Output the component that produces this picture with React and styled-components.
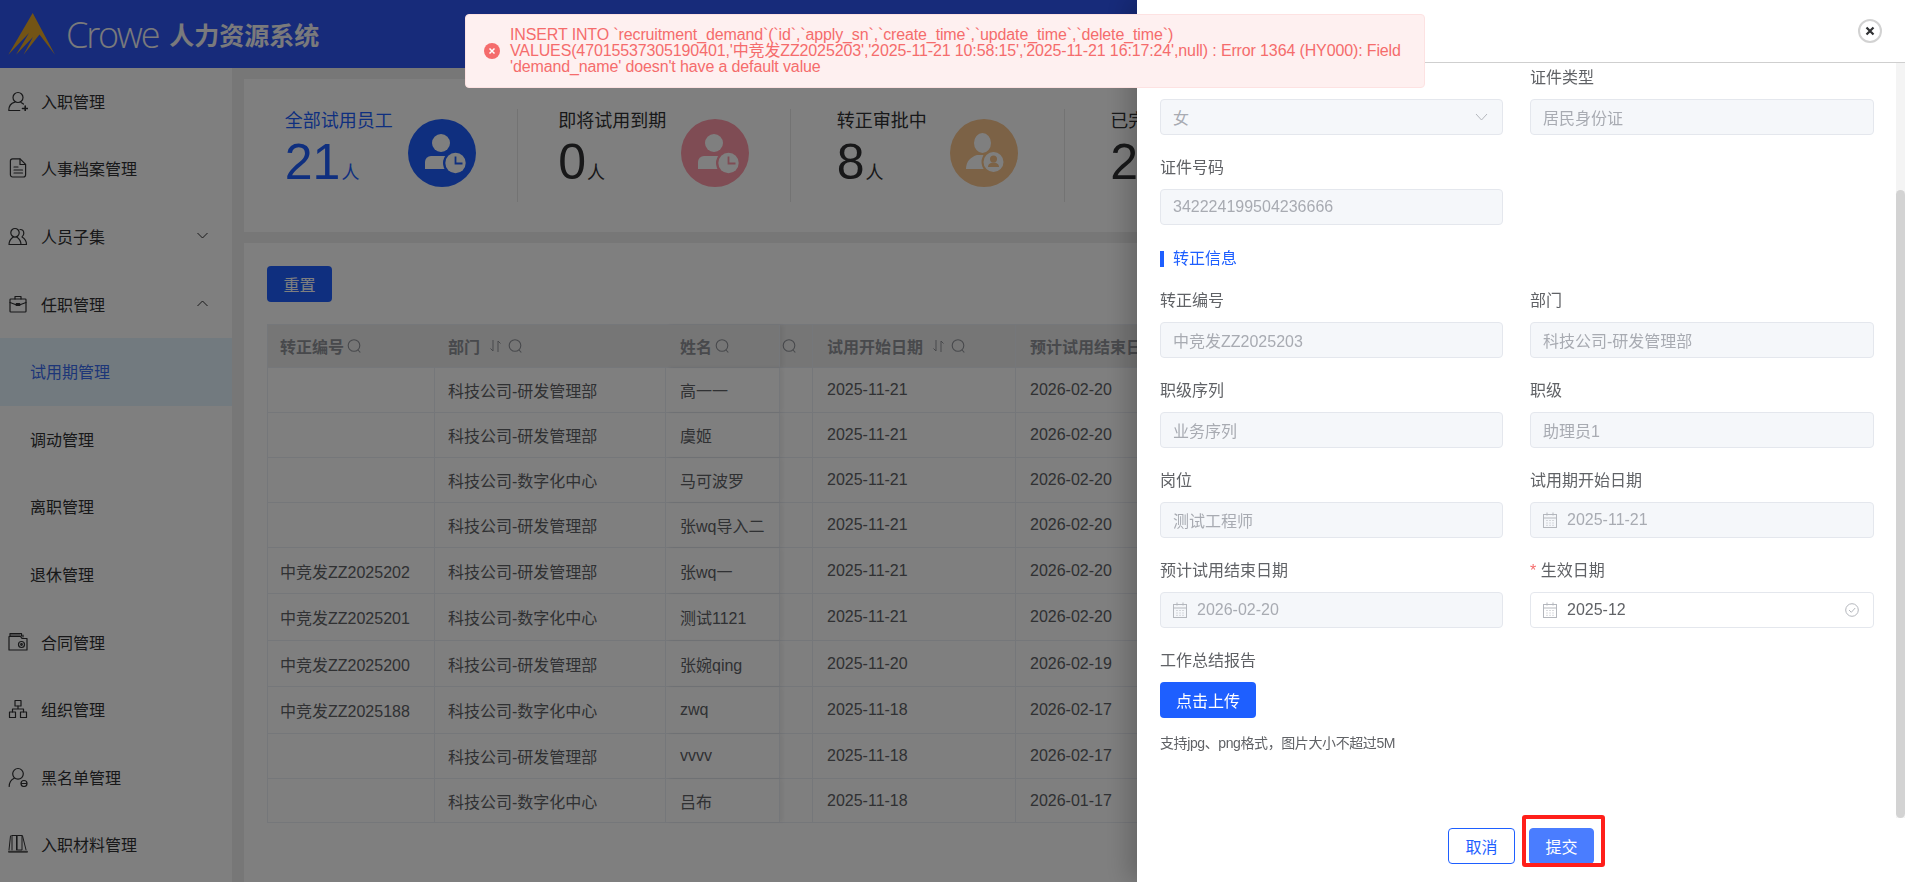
import React from "react";
import styled, { createGlobalStyle } from "styled-components";

const GlobalStyle = createGlobalStyle`
  html, body {
    margin: 0;
    padding: 0;
    height: 100%;
    overflow: hidden;
    font-family: "Liberation Sans", "Noto Sans CJK SC", sans-serif;
    color: #303133;
  }
`;

const Page = styled.div`
  display: flex;
  flex-direction: column;
  height: 100vh;
  overflow: hidden;
`;

const TopBar = styled.header`
  flex: 0 0 68px;
  display: flex;
  align-items: center;
  padding-left: 8px;
  background: #2e56f4;
  color: #fff;
`;

const LogoWord = styled.span`
  margin-left: 10px;
  font-family: "Open Sans", sans-serif;
  font-weight: 300;
  font-size: 36px;
  letter-spacing: -2.2px;
  color: #f4f4f8;
`;

const SystemName = styled.span`
  margin-left: 11px;
  font-size: 25px;
  font-weight: 700;
  color: #f4f4f8;
`;

const Content = styled.div`
  flex: 1;
  display: flex;
  min-height: 0;
`;

const Sidebar = styled.nav`
  flex: 0 0 232px;
  background: #fff;
`;

const MenuItem = styled.div`
  display: flex;
  align-items: center;
  box-sizing: border-box;
  height: 67.6px;
  padding-left: ${(p) => (p.$sub ? "30px" : "8px")};
  padding-bottom: 2px;
  font-size: 16px;
  color: ${(p) => (p.$active ? "#3a6cf0" : "#303133")};
  background: ${(p) => (p.$active ? "#e4f4fe" : "transparent")};
  svg.menu-icon {
    flex: 0 0 20px;
    margin-right: 13px;
  }
`;

const Chevron = styled.svg`
  margin-left: auto;
  margin-right: 24px;
`;

const Main = styled.main`
  flex: 1;
  min-width: 0;
  background: #eeeeee;
  padding: 11px 12px 0 12px;
  overflow: hidden;
`;

const StatCard = styled.section`
  display: grid;
  grid-template-columns: repeat(6, 273.5px);
  align-items: center;
  height: 153px;
  background: #fff;
`;

const Stat = styled.div`
  display: flex;
  justify-content: center;
  align-items: center;
  gap: 15px;
  height: 93px;
  border-right: 1px solid #e6e6e6;
  white-space: nowrap;
`;

const StatText = styled.div`
  display: flex;
  flex-direction: column;
  min-width: 98px;
  color: ${(p) => p.$color};
`;

const StatTitle = styled.div`
  font-size: 18px;
  line-height: 24px;
`;

const StatNumber = styled.div`
  font-size: 50px;
  line-height: 58px;
  span {
    font-size: 18px;
    margin-left: 1px;
  }
`;

const StatCircle = styled.svg`
  margin-top: -5px;
  flex: 0 0 68px;
`;

const TableCard = styled.section`
  margin-top: 11px;
  height: 700px;
  padding: 23px;
  background: #fff;
`;

const ResetButton = styled.button`
  display: block;
  width: 65px;
  height: 36px;
  padding: 0;
  border: 0;
  border-radius: 4px;
  background: #1e5fff;
  color: #fff;
  font: inherit;
  font-size: 16px;
`;

const Table = styled.div`
  margin-top: 22px;
  border-top: 1px solid #ebeef5;
  border-left: 1px solid #ebeef5;
  width: 1400px;
`;

const Row = styled.div`
  display: grid;
  grid-template-columns: 167px 231px 114px 33px 203px 230px 1fr;
  height: ${(p) => p.$height}px;
  box-sizing: border-box;
  border-bottom: 1px solid #ebeef5;
  background: ${(p) => (p.$head ? "#ececec" : "#fff")};
  color: ${(p) => (p.$head ? "#909399" : "#606266")};
  font-weight: ${(p) => (p.$head ? 700 : 400)};
  font-size: 16px;
`;

const Cell = styled.div`
  display: flex;
  align-items: center;
  gap: 3px;
  padding-left: ${(p) => p.$pad ?? 13}px;
  border-right: 1px solid ${(p) => (p.$plain ? "transparent" : "#ebeef5")};
  white-space: nowrap;
  overflow: hidden;
  ${(p) => p.$fixed && "position: relative; box-shadow: 3px 0 4px rgba(0,0,0,.06);"}
`;

const Backdrop = styled.div`
  position: fixed;
  inset: 0;
  background: rgba(0, 0, 0, 0.5);
`;

const Drawer = styled.aside`
  position: fixed;
  top: 0;
  right: 0;
  bottom: 0;
  width: 768px;
  display: flex;
  flex-direction: column;
  background: #fff;
  box-shadow: -8px 0 24px rgba(0, 0, 0, 0.22);
`;

const DrawerHead = styled.div`
  flex: 0 0 62px;
  display: flex;
  justify-content: flex-end;
  align-items: center;
  padding-right: 23px;
  box-sizing: content-box;
  border-bottom: 1px solid #cfcfcf;
`;

const CloseButton = styled.button`
  display: flex;
  align-items: center;
  justify-content: center;
  width: 24px;
  height: 24px;
  padding: 0;
  border: 2px solid #d2d2d2;
  border-radius: 50%;
  background: #fff;
`;

const DrawerBody = styled.div`
  position: relative;
  flex: 1;
  min-height: 0;
  padding: 4px 31px 0 23px;
  overflow: hidden;
`;

const Track = styled.div`
  position: absolute;
  top: 0;
  right: 0;
  bottom: 0;
  width: 9px;
  background: #f4f4f4;
`;

const Thumb = styled.div`
  position: absolute;
  top: 127px;
  bottom: 0;
  left: 0;
  right: 0;
  border-radius: 5px;
  background: #d3d3d3;
`;

const FieldGrid = styled.div`
  display: grid;
  grid-template-columns: 343px 344px;
  column-gap: 27px;
  row-gap: 22px;
`;

const Field = styled.div`
  display: flex;
  flex-direction: column;
  gap: 10px;
  ${(p) => p.$wide && "grid-column: 1 / -1;"}
`;

const Label = styled.label`
  min-height: 22px;
  font-size: 16px;
  line-height: 22px;
  color: #606266;
  &::before {
    content: ${(p) => (p.$required ? '"* "' : "none")};
    color: #f56c6c;
  }
`;

const InputBox = styled.div`
  display: flex;
  align-items: center;
  gap: 10px;
  height: 36px;
  box-sizing: border-box;
  padding: 0 12px;
  border: 1px solid #e4e7ed;
  border-radius: 4px;
  background: ${(p) => (p.$enabled ? "#fff" : "#f5f7fa")};
  color: ${(p) => (p.$enabled ? "#606266" : "#a8abb2")};
  font-size: 16px;
  svg.end {
    margin-left: auto;
    margin-right: 2px;
  }
`;

const SectionTitle = styled.h3`
  margin: 26px 0 23px;
  padding-left: 9px;
  height: 16px;
  border-left: 4px solid #1e5fff;
  font-size: 16px;
  font-weight: 400;
  line-height: 16px;
  color: #1e5fff;
`;

const UploadButton = styled.button`
  display: block;
  width: 96px;
  height: 36px;
  padding: 0;
  border: 0;
  border-radius: 4px;
  background: #1e5fff;
  color: #fff;
  font: inherit;
  font-size: 16px;
`;

const Hint = styled.p`
  margin: 15px 0 0;
  font-size: 14px;
  line-height: 20px;
  letter-spacing: -0.4px;
  color: #606266;
`;

const DrawerFoot = styled.div`
  flex: 0 0 64px;
  box-sizing: border-box;
  display: flex;
  justify-content: center;
  align-items: flex-start;
  gap: 14px;
  padding-top: 10px;
`;

const FootButton = styled.button`
  display: block;
  width: ${(p) => (p.$primary ? 65 : 67)}px;
  height: 36px;
  padding: 0;
  border: 1px solid ${(p) => (p.$primary ? "#4a7dff" : "#1e5fff")};
  border-radius: 4px;
  background: ${(p) => (p.$primary ? "#4a7dff" : "#fff")};
  color: ${(p) => (p.$primary ? "#fff" : "#1e5fff")};
  font: inherit;
  font-size: 16px;
`;

const SubmitWrap = styled.div`
  position: relative;
`;

const Highlight = styled.div`
  position: absolute;
  top: -13px;
  left: -7px;
  right: -11px;
  bottom: -3px;
  box-sizing: border-box;
  border: 4px solid #ff1f1a;
  border-radius: 3px;
`;

const Toast = styled.div`
  position: fixed;
  top: 14px;
  left: 465px;
  width: 960px;
  height: 74px;
  box-sizing: border-box;
  display: flex;
  align-items: center;
  gap: 10px;
  padding: 0 18px 0 18px;
  border: 1px solid #fde2e2;
  border-radius: 4px;
  background: #fef0f0;
  color: #f56c6c;
  font-size: 16px;
  line-height: 16px;
  letter-spacing: -0.13px;
  z-index: 5;
  svg {
    flex: 0 0 16px;
  }
`;

const ToastLine = styled.div`
  white-space: nowrap;
`;

const ic = { fill: "none", stroke: "#303133", strokeWidth: 1.2, strokeLinecap: "round", strokeLinejoin: "round" };

const icons = {
  userPlus: (
    <>
      <circle cx="10" cy="6.5" r="5" />
      <path d="M.8 19.5c0-4.3 2.6-7.4 6-8.3M.8 19.5h11M13 11.5c.9.4 1.7.9 2.4 1.5" />
      <path d="M14.5 17.500h5.500M17.200 15v5" strokeWidth="1.600" />
    </>
  ),
  doc: (
    <>
      <path d="M5 1h7.500L18 6.500V17a2.200 2.200 0 0 1-2.200 2.200H5A2.200 2.200 0 0 1 2.800 17V3.200A2.200 2.200 0 0 1 5 1z" transform="translate(-.4 -.2)" />
      <path d="M12 1v5.500h5.500M6 9h4M6 12h8.500M6 15h8.500" />
    </>
  ),
  users: (
    <>
      <path d="M7 2.500a4.200 4.200 0 0 1 4.200 4.200c0 2.300-1.900 4.400-4.200 4.400S2.800 9 2.800 6.700A4.200 4.200 0 0 1 7 2.500z" />
      <path d="M1 18.500c0-3.500 2.200-6.200 4.200-7.600M8.800 10.900c2 1.400 4.200 4.100 4.200 7.600H1" />
      <path d="M12 3.500c2.200 0 3.800 1.500 3.800 3.700 0 1.600-.8 2.800-1.800 3.700 2.300 1.300 4.500 3.800 4.500 7.600H13" />
    </>
  ),
  case: (
    <>
      <rect x="2" y="5" width="16" height="13" rx=".8" />
      <path d="M7 5V2.500h6V5M2 8.500l6 2.200h4l6-2.200" />
      <rect x="8.300" y="9.500" width="3.400" height="2" />
    </>
  ),
  folder: (
    <>
      <path d="M1 6.500V18h18V6.500H14L12.500 4.500H1z" />
      <path d="M2 4V1.500h11.500V4M3 3h9M15 5V3" />
      <circle cx="13.500" cy="12.500" r="3" />
      <circle cx="13.500" cy="12.500" r=".8" />
    </>
  ),
  org: (
    <>
      <rect x="7" y="1.500" width="6" height="5.500" />
      <rect x="1.500" y="13" width="6" height="5.500" />
      <rect x="12.500" y="13" width="6" height="5.500" />
      <path d="M10 7v3M4.500 13v-3h11v3" />
    </>
  ),
  userMinus: (
    <>
      <path d="M10 1.500a5.300 5.300 0 0 1 5.300 5.300c0 3-2.300 5.400-5.300 5.400S4.700 9.800 4.700 6.800A5.300 5.300 0 0 1 10 1.500z" />
      <path d="M1.200 19.500c0-3.700 2-6.700 5-8.200" />
      <circle cx="16" cy="16.500" r="3" />
      <path d="M13.500 16.500h5" />
    </>
  ),
  books: (
    <>
      <path d="M4 1.500v14.500M8.500 1.500v14.500M4 1.500h4.500M9.500 1.500H14v14.500H9.500zM14.500 1.800l3.500 14M2.500 2L1 16" strokeWidth="1" />
      <path d="M1 17.800h18" strokeWidth="2" stroke="#5a5a5a" />
    </>
  ),
};

const MenuIcon = ({ name }) => (
  <svg className="menu-icon" width="20" height="20" viewBox="0 0 20 20" {...ic}>
    {icons[name]}
  </svg>
);

const ChevronIcon = ({ up }) => (
  <Chevron width="11" height="7" viewBox="0 0 11 7" fill="none" stroke="#303133" strokeWidth="1">
    <path d={up ? "M.5 6L5.500 1l5 5" : "M.5 1l5 5 5-5"} />
  </Chevron>
);

const SearchIcon = () => (
  <svg width="15" height="16" viewBox="0 0 15 16" fill="none" stroke="#909399" strokeWidth="1.100">
    <circle cx="7" cy="7.500" r="5.800" />
    <path d="M11 12l2.300 2.500" />
  </svg>
);

const SortIcon = () => (
  <svg width="17" height="16" viewBox="0 0 17 16" fill="none" stroke="#909399" strokeWidth="1" style={{ marginLeft: 5 }}>
    <path d="M5 2v11L2.500 10.500M10 14V3l2.500 2.500" />
  </svg>
);

const CalendarIcon = () => (
  <svg width="14" height="16" viewBox="0 0 14 16" fill="none" stroke="#b4b7bd" strokeWidth="1">
    <rect x=".5" y="2.500" width="13" height="13" />
    <path d="M.5 6h13M4 .5v3M10 .5v3M3.500 8.500h1M6.500 8.500h1M9.500 8.500h1M3.500 11h1M6.500 11h1M9.500 11h1M3.500 13.300h1M6.500 13.300h1M9.500 13.300h1" />
  </svg>
);

const ClockCircle = ({ color }) => (
  <StatCircle width="68" height="68" viewBox="-34 -34 68 68">
    <circle r="34" fill={color} />
    <circle cx="-1" cy="-10" r="9" fill="#fff" />
    <path d="M-17 16v-7a6 6 0 0 1 6-6h14a6 6 0 0 1 6 6v7z" fill="#fff" />
    <circle cx="13.500" cy="10" r="12.500" fill={color} />
    <circle cx="13.500" cy="10" r="10.200" fill="#fff" />
    <path d="M13.500 3.500v7h7" fill="none" stroke={color} strokeWidth="1.800" />
  </StatCircle>
);

const PersonCircle = ({ color }) => (
  <StatCircle width="68" height="68" viewBox="-34 -34 68 68">
    <circle r="34" fill={color} />
    <ellipse cx="-1.500" cy="-10" rx="8.500" ry="10" fill="#fff" />
    <path d="M-18 16c0-8 5-12 11-14h12c7 2 10 6 12 14z" fill="#fff" />
    <circle cx="9.500" cy="9" r="12" fill={color} />
    <circle cx="9.500" cy="9" r="10" fill="#fff" />
    <circle cx="9.500" cy="6" r="3.500" fill={color} />
    <path d="M4 14c0-3 2.500-4.500 5.500-4.500S15 11 15 14z" fill={color} />
  </StatCircle>
);

const menu = [
  { label: "入职管理", icon: "userPlus" },
  { label: "人事档案管理", icon: "doc" },
  { label: "人员子集", icon: "users", chevron: "down" },
  { label: "任职管理", icon: "case", chevron: "up" },
  { label: "试用期管理", sub: true, active: true },
  { label: "调动管理", sub: true },
  { label: "离职管理", sub: true },
  { label: "退休管理", sub: true },
  { label: "合同管理", icon: "folder" },
  { label: "组织管理", icon: "org" },
  { label: "黑名单管理", icon: "userMinus" },
  { label: "入职材料管理", icon: "books" },
];

const stats = [
  { title: "全部试用员工", value: "21", color: "#1e5fff", circle: <ClockCircle color="#1e5fff" /> },
  { title: "即将试用到期", value: "0", color: "#303133", circle: <ClockCircle color="#ff98a8" /> },
  { title: "转正审批中", value: "8", color: "#303133", circle: <PersonCircle color="#f8c48c" /> },
  { title: "已完", value: "2", color: "#303133", circle: <PersonCircle color="#67c23a" /> },
];

const rows = [
  ["", "科技公司-研发管理部", "高一一", "2025-11-21", "2026-02-20", 45],
  ["", "科技公司-研发管理部", "虞姬", "2025-11-21", "2026-02-20", 45],
  ["", "科技公司-数字化中心", "马可波罗", "2025-11-21", "2026-02-20", 45],
  ["", "科技公司-研发管理部", "张wq导入二", "2025-11-21", "2026-02-20", 45],
  ["中竞发ZZ2025202", "科技公司-研发管理部", "张wq一", "2025-11-21", "2026-02-20", 46],
  ["中竞发ZZ2025201", "科技公司-数字化中心", "测试1121", "2025-11-21", "2026-02-20", 47],
  ["中竞发ZZ2025200", "科技公司-研发管理部", "张婉qing", "2025-11-20", "2026-02-19", 46],
  ["中竞发ZZ2025188", "科技公司-数字化中心", "zwq", "2025-11-18", "2026-02-17", 47],
  ["", "科技公司-研发管理部", "vvvv", "2025-11-18", "2026-02-17", 45],
  ["", "科技公司-数字化中心", "吕布", "2025-11-18", "2026-01-17", 44],
];

const fieldsTop = [
  { label: "", value: "女", select: true },
  { label: "证件类型", value: "居民身份证" },
  { label: "证件号码", value: "342224199504236666" },
];

const fieldsProbation = [
  { label: "转正编号", value: "中竞发ZZ2025203" },
  { label: "部门", value: "科技公司-研发管理部" },
  { label: "职级序列", value: "业务序列" },
  { label: "职级", value: "助理员1" },
  { label: "岗位", value: "测试工程师" },
  { label: "试用期开始日期", value: "2025-11-21", date: true },
  { label: "预计试用结束日期", value: "2026-02-20", date: true },
  { label: "生效日期", value: "2025-12", date: true, enabled: true, required: true },
];

const FormField = ({ label, value, select, date, enabled, required }) => (
  <Field>
    <Label $required={required}>{label}</Label>
    <InputBox $enabled={enabled}>
      {date && <CalendarIcon />}
      {value}
      {select && (
        <svg className="end" width="13" height="8" viewBox="0 0 13 8" fill="none" stroke="#b4b7bd" strokeWidth="1">
          <path d="M1 1l5.500 6L12 1" />
        </svg>
      )}
      {enabled && (
        <svg className="end" width="14" height="14" viewBox="0 0 14 14" fill="none" stroke="#b4b7bd" strokeWidth="1">
          <circle cx="7" cy="7" r="6.300" />
          <path d="M4 7l2.300 2.300L10.200 5" />
        </svg>
      )}
    </InputBox>
  </Field>
);

export default function App() {
  return (
    <Page>
      <GlobalStyle />
      <TopBar>
        <svg width="48" height="44" viewBox="8 10 48 44">
          <path
            d="M32.700 11L55 52.700L39.500 32.500L23.500 52.700L33 35L16 52.700L29 31L8.300 52.700Z"
            fill="#e6a92a"
          />
        </svg>
        <LogoWord>Crowe</LogoWord>
        <SystemName>人力资源系统</SystemName>
      </TopBar>
      <Content>
        <Sidebar>
          {menu.map((m) => (
            <MenuItem key={m.label} $sub={m.sub} $active={m.active}>
              {m.icon && <MenuIcon name={m.icon} />}
              {m.label}
              {m.chevron && <ChevronIcon up={m.chevron === "up"} />}
            </MenuItem>
          ))}
        </Sidebar>
        <Main>
          <StatCard>
            {stats.map((s) => (
              <Stat key={s.title}>
                <StatText $color={s.color}>
                  <StatTitle>{s.title}</StatTitle>
                  <StatNumber>
                    {s.value}
                    <span>人</span>
                  </StatNumber>
                </StatText>
                {s.circle}
              </Stat>
            ))}
          </StatCard>
          <TableCard>
            <ResetButton>重置</ResetButton>
            <Table>
              <Row $head $height={43}>
                <Cell $plain $pad={12}>
                  转正编号
                  <SearchIcon />
                </Cell>
                <Cell $plain>
                  部门
                  <SortIcon />
                  <SearchIcon />
                </Cell>
                <Cell $fixed $pad={14}>
                  姓名
                  <SearchIcon />
                </Cell>
                <Cell $pad={2}>
                  <SearchIcon />
                </Cell>
                <Cell $pad={14}>
                  试用开始日期
                  <SortIcon />
                  <SearchIcon />
                </Cell>
                <Cell $pad={14}>预计试用结束日期</Cell>
                <Cell />
              </Row>
              {rows.map((r, i) => (
                <Row key={i} $height={r[5]}>
                  <Cell $pad={12}>{r[0]}</Cell>
                  <Cell>{r[1]}</Cell>
                  <Cell $fixed $pad={14}>{r[2]}</Cell>
                  <Cell />
                  <Cell $pad={14}>{r[3]}</Cell>
                  <Cell $pad={14}>{r[4]}</Cell>
                  <Cell />
                </Row>
              ))}
            </Table>
          </TableCard>
        </Main>
      </Content>
      <Backdrop />
      <Drawer>
        <DrawerHead>
          <CloseButton>
            <svg width="10" height="10" viewBox="0 0 10 10" stroke="#303133" strokeWidth="2.200">
              <path d="M1.500 1.500l7 7M8.500 1.500l-7 7" />
            </svg>
          </CloseButton>
        </DrawerHead>
        <DrawerBody>
          <FieldGrid>
            {fieldsTop.map((f) => (
              <FormField key={f.value} {...f} />
            ))}
          </FieldGrid>
          <SectionTitle>转正信息</SectionTitle>
          <FieldGrid>
            {fieldsProbation.map((f) => (
              <FormField key={f.label} {...f} />
            ))}
            <Field $wide>
              <Label>工作总结报告</Label>
              <div>
                <UploadButton>点击上传</UploadButton>
                <Hint>支持jpg、png格式，图片大小不超过5M</Hint>
              </div>
            </Field>
          </FieldGrid>
          <Track>
            <Thumb />
          </Track>
        </DrawerBody>
        <DrawerFoot>
          <FootButton>取消</FootButton>
          <SubmitWrap>
            <FootButton $primary>提交</FootButton>
            <Highlight />
          </SubmitWrap>
        </DrawerFoot>
      </Drawer>
      <Toast>
        <svg width="16" height="16" viewBox="0 0 16 16">
          <circle cx="8" cy="8" r="8" fill="#f56c6c" />
          <path d="M5.500 5.500l5 5M10.500 5.500l-5 5" stroke="#fff" strokeWidth="1.500" />
        </svg>
        <div>
          <ToastLine>INSERT INTO `recruitment_demand`(`id`,`apply_sn`,`create_time`,`update_time`,`delete_time`)</ToastLine>
          <ToastLine>VALUES(47015537305190401,'中竞发ZZ2025203','2025-11-21 10:58:15','2025-11-21 16:17:24',null) : Error 1364 (HY000): Field</ToastLine>
          <ToastLine>'demand_name' doesn't have a default value</ToastLine>
        </div>
      </Toast>
    </Page>
  );
}
